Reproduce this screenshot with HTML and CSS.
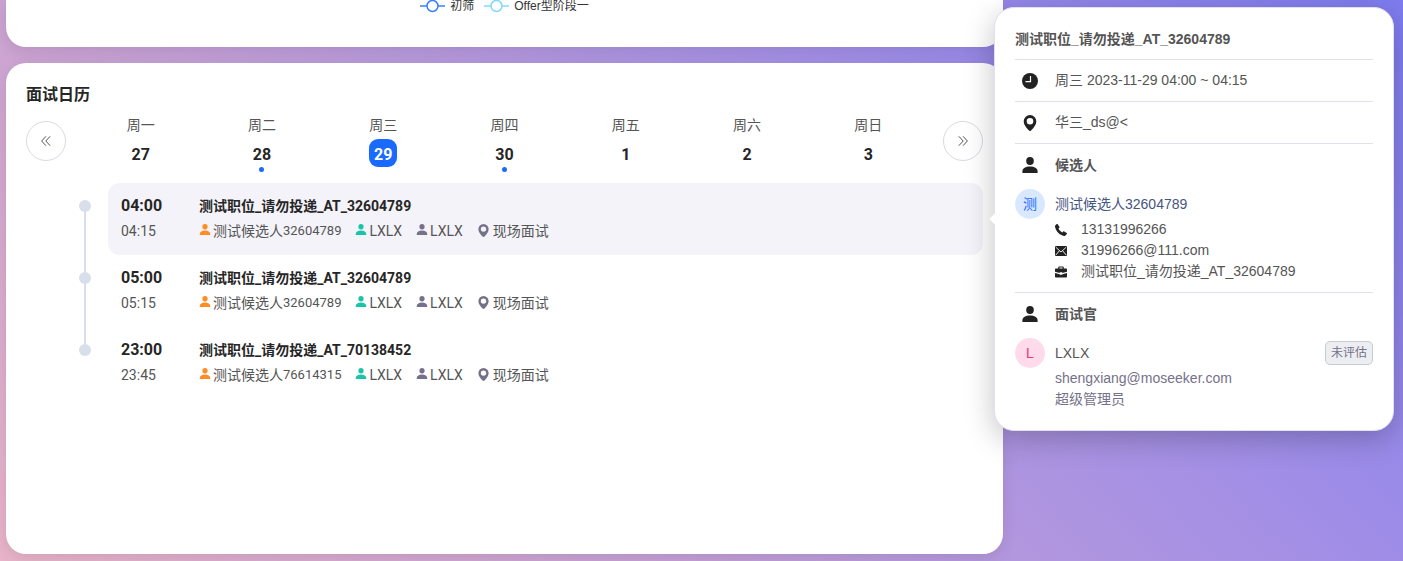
FILE: index.html
```html
<!DOCTYPE html>
<html lang="zh-CN">
<head>
<meta charset="utf-8">
<title>面试日历</title>
<link rel="stylesheet" href="styles.css">
</head>
<body>
<svg class="sprite" aria-hidden="true">
  <symbol id="user" viewBox="0 0 16 16"><ellipse cx="8" cy="4" rx="3.8" ry="4"/><path d="M.4 16v-1.6C.4 11.600 3.600 9.600 8 9.600s7.600 2 7.600 4.800V16z"/></symbol>
  <symbol id="pin" viewBox="0 0 14 16"><path fill-rule="evenodd" d="M7 0a6.300 6.300 0 0 1 6.300 6.400c0 3.500-2.600 5.900-4.800 8.700-.9 1.200-2.100 1.200-3 0C3.300 12.300.7 9.900.7 6.400A6.300 6.300 0 0 1 7 0zm0 3a3.300 3.300 0 1 0 0 6.600A3.300 3.300 0 0 0 7 3z"/></symbol>
  <symbol id="clock" viewBox="0 0 16 16"><circle cx="8" cy="8" r="8"/><path d="M8.500 3v5.600H3.500" fill="none" stroke="#fff" stroke-width="1.200"/></symbol>
  <symbol id="phone" viewBox="0 0 12 12"><path d="M.2 1.500 1.700.1c.3-.3.700-.2 1 .1l1.700 2.500c.2.400.2.700-.1 1l-.8.900c.8 1.700 2 2.900 3.700 3.800l1-.9c.3-.3.700-.3 1 0l2.500 1.600c.4.300.4.700.1 1l-1.300 1.500c-.4.400-.9.400-1.500.3C4.800 11.200.8 7.200.100 3c-.1-.6-.2-1.100.1-1.500z"/></symbol>
  <symbol id="mail" viewBox="0 0 12 10"><rect width="12" height="10" rx="1"/><path d="M.8 1.200 6 6l5.200-4.800M.8 9l3.400-4M11.200 9 7.800 5" fill="none" stroke="#fff" stroke-width=".9"/></symbol>
  <symbol id="case" viewBox="0 0 12 11"><path fill-rule="evenodd" d="M3.200 2V.9c0-.5.400-.9.900-.9h3.800c.5 0 .9.400.9.900V2H11c.6 0 1 .4 1 1v2.300L7.300 6.600V5.700H4.700v.9L0 5.300V3c0-.6.400-1 1-1zm1.200 0h3.200V1.100H4.400zM0 6.400l4.700 1.300v.5h2.600v-.5L12 6.400V10c0 .6-.4 1-1 1H1c-.6 0-1-.4-1-1z"/></symbol>
  <symbol id="prev" viewBox="0 0 10 10"><path d="M5 .3.600 5 5 9.700M9.200.3 4.800 5l4.400 4.700" fill="none" stroke="currentColor"/></symbol>
  <symbol id="next" viewBox="0 0 10 10"><path d="M5 .3 9.400 5 5 9.700M.8.3 5.200 5 .8 9.700" fill="none" stroke="currentColor"/></symbol>
  <symbol id="series" viewBox="0 0 25 14"><path d="M0 7h25" stroke="currentColor" stroke-width="1.500"/><circle cx="12.500" cy="7" r="5.500" fill="#fff" stroke="currentColor" stroke-width="1.500"/></symbol>
</svg>

<main class="page">
  <section class="card chart">
    <div class="legend">
      <span class="legend-item"><svg class="series blue"><use href="#series"/></svg>初筛</span>
      <span class="legend-item"><svg class="series sky"><use href="#series"/></svg>Offer型阶段一</span>
    </div>
  </section>

  <section class="card calendar">
    <h2>面试日历</h2>
    <div class="week">
      <button class="nav" type="button" aria-label="上一周"><svg><use href="#prev"/></svg></button>
      <ol class="days">
        <li><span>周一</span><b>27</b></li>
        <li class="busy"><span>周二</span><b>28</b></li>
        <li class="today"><span>周三</span><b>29</b></li>
        <li class="busy"><span>周四</span><b>30</b></li>
        <li><span>周五</span><b>1</b></li>
        <li><span>周六</span><b>2</b></li>
        <li><span>周日</span><b>3</b></li>
      </ol>
      <button class="nav" type="button" aria-label="下一周"><svg><use href="#next"/></svg></button>
    </div>

    <ul class="agenda">
      <li>
        <div class="event active">
          <div class="time"><b>04:00</b><span>04:15</span></div>
          <div class="info">
            <h3>测试职位_请勿投递_AT_32604789</h3>
            <p>
              <span class="tag"><svg class="orange"><use href="#user"/></svg>测试候选人<span class="num">32604789</span></span>
              <span class="tag"><svg class="teal"><use href="#user"/></svg>LXLX</span>
              <span class="tag"><svg class="gray"><use href="#user"/></svg>LXLX</span>
              <span class="tag place"><svg class="gray"><use href="#pin"/></svg>现场面试</span>
            </p>
          </div>
        </div>
      </li>
      <li>
        <div class="event">
          <div class="time"><b>05:00</b><span>05:15</span></div>
          <div class="info">
            <h3>测试职位_请勿投递_AT_32604789</h3>
            <p>
              <span class="tag"><svg class="orange"><use href="#user"/></svg>测试候选人<span class="num">32604789</span></span>
              <span class="tag"><svg class="teal"><use href="#user"/></svg>LXLX</span>
              <span class="tag"><svg class="gray"><use href="#user"/></svg>LXLX</span>
              <span class="tag place"><svg class="gray"><use href="#pin"/></svg>现场面试</span>
            </p>
          </div>
        </div>
      </li>
      <li>
        <div class="event">
          <div class="time"><b>23:00</b><span>23:45</span></div>
          <div class="info">
            <h3>测试职位_请勿投递_AT_70138452</h3>
            <p>
              <span class="tag"><svg class="orange"><use href="#user"/></svg>测试候选人<span class="num">76614315</span></span>
              <span class="tag"><svg class="teal"><use href="#user"/></svg>LXLX</span>
              <span class="tag"><svg class="gray"><use href="#user"/></svg>LXLX</span>
              <span class="tag place"><svg class="gray"><use href="#pin"/></svg>现场面试</span>
            </p>
          </div>
        </div>
      </li>
    </ul>
  </section>
</main>

<aside class="popover">
  <h3 class="row">测试职位_请勿投递_AT_32604789</h3>
  <div class="row"><span class="lead"><svg><use href="#clock"/></svg></span>周三 2023-11-29 04:00 ~ 04:15</div>
  <div class="row"><span class="lead"><svg><use href="#pin"/></svg></span>华三_ds@&lt;</div>
  <section class="block">
    <h4><span class="lead"><svg><use href="#user"/></svg></span>候选人</h4>
    <div class="person"><span class="avatar">测</span><a href="#">测试候选人32604789</a></div>
    <ul class="contact">
      <li><svg><use href="#phone"/></svg>13131996266</li>
      <li><svg><use href="#mail"/></svg>31996266@111.com</li>
      <li><svg><use href="#case"/></svg>测试职位_请勿投递_AT_32604789</li>
    </ul>
  </section>
  <section class="block">
    <h4><span class="lead"><svg><use href="#user"/></svg></span>面试官</h4>
    <div class="person"><span class="avatar pink">L</span><span>LXLX</span><span class="status">未评估</span></div>
    <ul class="contact muted">
      <li>shengxiang@moseeker.com</li>
      <li>超级管理员</li>
    </ul>
  </section>
</aside>
</body>
</html>
```

FILE: styles.css
```css
* { box-sizing: border-box; margin: 0; padding: 0; }
ul, ol { list-style: none; }
svg { flex: none; fill: currentColor; }
.sprite { position: absolute; width: 0; height: 0; }

body {
  min-height: 100vh;
  background: linear-gradient(45deg, #e9b4c9 0%, #c9a2d4 30%, #9f8de7 71%, #7e7cf0 100%);
  color: #555;
  font: 14px/22px Roboto, "Noto Sans CJK SC", sans-serif;
}

.page {
  display: flex;
  flex-direction: column;
  gap: 16px;
  min-height: 100vh;
  padding: 0 400px 7px 6px;
}
.card {
  padding: 20px;
  border-radius: 20px;
  background: #fff;
  box-shadow: 0 4px 16px rgba(0, 0, 0, .1);
}

.chart { padding: 0 20px 35px; border-radius: 0 0 20px 20px; }
.legend {
  display: flex;
  align-items: center;
  justify-content: center;
  gap: 10px;
  height: 12px;
  color: #333;
  font: 12px/14px "Liberation Sans", "Noto Sans CJK SC", sans-serif;
}
.legend-item { display: flex; align-items: center; gap: 5px; }
.series { width: 25px; height: 14px; }
.blue { color: #3a80ff; }
.sky { color: #84d9fb; }

.calendar { flex: 1; }
.calendar h2 { color: #262626; font-size: 16px; line-height: 24px; }

.week { display: flex; align-items: flex-start; gap: 14px; padding-top: 7px; }
.nav {
  display: flex;
  align-items: center;
  justify-content: center;
  width: 40px;
  height: 40px;
  margin-top: 7px;
  border: 1px solid #d9d9e5;
  border-radius: 50%;
  background: transparent;
  color: #555;
}
.nav svg { width: 10px; height: 10px; }
.days { flex: 1; display: grid; grid-template-columns: repeat(7, 1fr); }
.days li {
  display: flex;
  flex-direction: column;
  align-items: center;
  gap: 3px;
  height: 69px;
}
.days b {
  min-width: 28px;
  height: 28px;
  padding-top: 1px;
  border-radius: 9px;
  color: #262626;
  font-size: 16px;
  line-height: 30px;
  text-align: center;
}
.today b { background: #1a6aff; color: #fff; }
.busy::after {
  content: "";
  width: 5px;
  height: 5px;
  margin-top: -3px;
  border-radius: 50%;
  background: #1a6aff;
}

.agenda li {
  position: relative;
  padding-left: 82px;
}
.agenda li::before {
  content: "";
  position: absolute;
  top: 17px;
  left: 53px;
  width: 12px;
  height: 12px;
  border-radius: 50%;
  background: #d8dfea;
}
.agenda li:not(:last-child)::after {
  content: "";
  position: absolute;
  top: 23px;
  left: 58px;
  width: 2px;
  height: 100%;
  background: #d8dfea;
}
.event { display: flex; padding: 12px 13px 13px; border-radius: 12px; }
.event.active { background: #f4f3f9; }
.time { display: flex; flex-direction: column; gap: 3px; width: 78px; }
.time b { color: #262626; font-size: 16px; }
.info { display: flex; flex-direction: column; gap: 3px; }
.info h3 { color: #262626; font-size: 14px; line-height: 22px; }
.num { font-size: 13px; }
.info p { display: flex; gap: 14px; height: 22px; }
.tag { display: flex; align-items: center; white-space: nowrap; }
.tag svg { width: 12px; height: 11px; margin: 0 2px 3px 0; }
.place svg { width: 13px; height: 13px; margin: 0 3px 2px 0; }
.orange { color: #ff8d22; }
.teal { color: #19c5a8; }
.gray { color: #75718a; }

.popover {
  position: absolute;
  top: 7px;
  right: 9px;
  width: 400px;
  padding: 10px 20px 20px;
  border: 1px solid #dfe1f0;
  border-radius: 20px;
  background: #fff;
  box-shadow: 0 8px 30px rgba(0, 0, 0, .24);
  color: #555;
  font: 14px/21px "Liberation Sans", "Noto Sans CJK SC", sans-serif;
}
.popover::before {
  content: "";
  position: absolute;
  top: 207px;
  left: -4px;
  width: 8px;
  height: 8px;
  background: #fff;
  transform: rotate(45deg);
}
.row { display: flex; align-items: center; height: 42px; border-bottom: 1px solid #e0e0ef; }
h3.row { padding-top: 2px; font-size: 14px; }
.lead { display: flex; justify-content: center; width: 30px; margin-right: 10px; color: #222; }
.lead svg { width: 16px; height: 16px; }
.block + .block { border-top: 1px solid #e0e0f2; }
.block h4 { display: flex; align-items: center; height: 42px; font-size: 14px; }
.person { display: flex; align-items: center; gap: 10px; padding-top: 3px; }
.person a { color: #465583; text-decoration: none; }
.avatar {
  width: 30px;
  height: 30px;
  border-radius: 50%;
  background: #d9e8ff;
  color: #1a6aff;
  line-height: 30px;
  text-align: center;
}
.avatar.pink { background: #ffdaea; color: #ee3278; }
.contact { padding: 0 0 10px 40px; }
.contact li { display: flex; align-items: center; }
.contact svg { width: 12px; height: 12px; margin-right: 14px; color: #222; }
.contact.muted { padding-bottom: 0; color: #75718a; }
.status {
  margin-left: auto;
  padding: 0 5px;
  border: 1px solid #c7cbd4;
  border-radius: 5px;
  background: #eceef1;
  color: #75718a;
  font-size: 12px;
  line-height: 22px;
}
```
